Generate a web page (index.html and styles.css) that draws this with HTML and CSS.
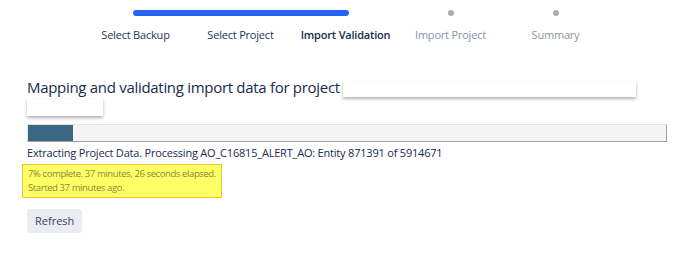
FILE: index.html
```html
<!DOCTYPE html>
<html lang="en">
<head>
  <meta charset="UTF-8">
  <title>Import Validation</title>
  <link rel="stylesheet" href="styles.css">
</head>
<body>
  <ol class="tracker">
    <li class="track-bar"></li>
    <li class="track-dot step-4"></li>
    <li class="track-dot step-5"></li>
    <li class="step done">Select Backup</li>
    <li class="step done">Select Project</li>
    <li class="step current">Import Validation</li>
    <li class="step todo">Import Project</li>
    <li class="step todo">Summary</li>
  </ol>

  <div class="content">
    <h2 class="title">Mapping and validating import data for project <span class="redact redact-long"></span> <span class="redact redact-short"></span></h2>

    <div class="progress">
      <div class="progress-fill" style="width: 7%"></div>
    </div>

    <p class="status">Extracting Project Data. Processing AO_C16815_ALERT_AO: Entity 871391 of 5914671</p>

    <div class="elapsed">
      7% complete. 37 minutes, 26 seconds elapsed.<br>
      Started 37 minutes ago.
    </div>

    <button class="btn">Refresh</button>
  </div>
</body>
</html>
```

FILE: styles.css
```css
body {
  margin: 0;
  font-family: "Open Sans", "Noto Sans", sans-serif;
  color: #172b4d;
  background: #fff;
}
.tracker {
  list-style: none;
  margin: 0 0 0 83px;
  padding: 10px 0 0;
  display: grid;
  grid-template-columns: repeat(5, 105px);
  grid-template-rows: 6px auto;
  row-gap: 11px;
}
.track-bar {
  grid-column: 1 / 4;
  grid-row: 1;
  margin: 0 49px 0 50px;
  background: #2465f5;
  border-radius: 3px;
}
.track-dot {
  grid-row: 1;
  justify-self: center;
  width: 6px;
  height: 6px;
  border-radius: 50%;
  background: #a5adba;
}
.step-4 { grid-column: 4; }
.step-5 { grid-column: 5; }
.step {
  grid-row: 2;
  text-align: center;
  font-size: 11px;
  letter-spacing: -0.2px;
  line-height: 16px;
  white-space: nowrap;
}
.step.done { color: #253858; }
.step.current { color: #172b4d; font-weight: 600; }
.step.todo { color: #8993a4; }
.content {
  padding: 0 13px 0 27px;
}
.title {
  margin: 35px 0 0;
  font-size: 15px;
  letter-spacing: -0.3px;
  font-weight: 400;
  line-height: 19px;
  color: #172b4d;
}
.redact {
  display: inline-block;
  background: #fff;
  box-shadow: 0 2px 3px rgba(0,0,0,0.3);
  vertical-align: -4px;
}
.redact-long { width: 293px; height: 16px; }
.redact-short { width: 76px; height: 17px; margin-top: 2px; }
.progress {
  margin-top: 8px;
  height: 16px;
  background: #f4f4f4;
  border: 1px solid #e4e4e4;
  border-right-color: #a0a0a0;
  border-bottom-color: #a0a0a0;
}
.progress-fill {
  height: 100%;
  background: #3d6584;
}
.status {
  margin: 3px 0 0;
  font-size: 11px;
  letter-spacing: -0.2px;
  line-height: 16px;
  color: #172b4d;
}
.elapsed {
  display: inline-block;
  margin: 3px 0 0 -5px;
  padding: 2px 5px 2px 5px;
  background: #ffff66;
  border: 1px solid #f2c232;
  font-size: 9.5px;
  letter-spacing: -0.4px;
  line-height: 14px;
  color: #8a8a38;
}
.btn {
  display: block;
  margin-top: 11px;
  padding: 4px 8px;
  font-family: inherit;
  font-size: 11px;
  line-height: 16px;
  color: #344563;
  background: #ebecf0;
  border: none;
  border-radius: 3px;
}
```
